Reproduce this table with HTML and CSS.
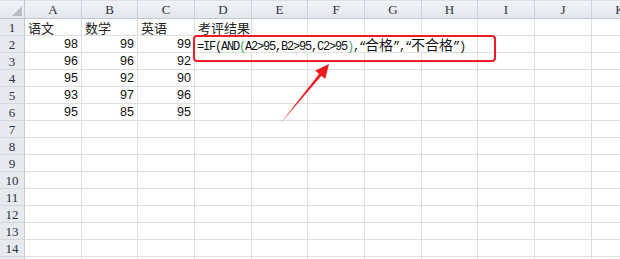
FILE: index.html
```html
<!DOCTYPE html>
<html lang="zh-CN">
<head>
<meta charset="utf-8">
<title>考评结果</title>
<link rel="stylesheet" href="styles.css">
</head>
<body>
<div class="sheet">
  <div class="corner"></div>
  <div class="ch">A</div><div class="ch">B</div><div class="ch">C</div><div class="ch">D</div><div class="ch">E</div><div class="ch">F</div><div class="ch">G</div><div class="ch">H</div><div class="ch">I</div><div class="ch">J</div><div class="ch">K</div>

  <div class="rh">1</div><div class="c t">语文</div><div class="c t">数学</div><div class="c t">英语</div><div class="c t">考评结果</div><div class="c"></div><div class="c"></div><div class="c"></div><div class="c"></div><div class="c"></div><div class="c"></div><div class="c"></div>

  <div class="rh">2</div><div class="c n">98</div><div class="c n">99</div><div class="c n">99</div>
  <div class="c formula">=IF(AND<span class="paren">(</span>A2&gt;95,B2&gt;95,C2&gt;95<span class="paren">)</span>,“<span class="cjk">合格</span>”,“<span class="cjk">不合格</span>”)</div>
  <div class="c"></div><div class="c"></div><div class="c"></div>

  <div class="rh">3</div><div class="c n">96</div><div class="c n">96</div><div class="c n">92</div><div class="c"></div><div class="c"></div><div class="c"></div><div class="c"></div><div class="c"></div><div class="c"></div><div class="c"></div><div class="c"></div>
  <div class="rh">4</div><div class="c n">95</div><div class="c n">92</div><div class="c n">90</div><div class="c"></div><div class="c"></div><div class="c"></div><div class="c"></div><div class="c"></div><div class="c"></div><div class="c"></div><div class="c"></div>
  <div class="rh">5</div><div class="c n">93</div><div class="c n">97</div><div class="c n">96</div><div class="c"></div><div class="c"></div><div class="c"></div><div class="c"></div><div class="c"></div><div class="c"></div><div class="c"></div><div class="c"></div>
  <div class="rh">6</div><div class="c n">95</div><div class="c n">85</div><div class="c n">95</div><div class="c"></div><div class="c"></div><div class="c"></div><div class="c"></div><div class="c"></div><div class="c"></div><div class="c"></div><div class="c"></div>

  <div class="rh">7</div><div class="c"></div><div class="c"></div><div class="c"></div><div class="c"></div><div class="c"></div><div class="c"></div><div class="c"></div><div class="c"></div><div class="c"></div><div class="c"></div><div class="c"></div>
  <div class="rh">8</div><div class="c"></div><div class="c"></div><div class="c"></div><div class="c"></div><div class="c"></div><div class="c"></div><div class="c"></div><div class="c"></div><div class="c"></div><div class="c"></div><div class="c"></div>
  <div class="rh">9</div><div class="c"></div><div class="c"></div><div class="c"></div><div class="c"></div><div class="c"></div><div class="c"></div><div class="c"></div><div class="c"></div><div class="c"></div><div class="c"></div><div class="c"></div>
  <div class="rh">10</div><div class="c"></div><div class="c"></div><div class="c"></div><div class="c"></div><div class="c"></div><div class="c"></div><div class="c"></div><div class="c"></div><div class="c"></div><div class="c"></div><div class="c"></div>
  <div class="rh">11</div><div class="c"></div><div class="c"></div><div class="c"></div><div class="c"></div><div class="c"></div><div class="c"></div><div class="c"></div><div class="c"></div><div class="c"></div><div class="c"></div><div class="c"></div>
  <div class="rh">12</div><div class="c"></div><div class="c"></div><div class="c"></div><div class="c"></div><div class="c"></div><div class="c"></div><div class="c"></div><div class="c"></div><div class="c"></div><div class="c"></div><div class="c"></div>
  <div class="rh">13</div><div class="c"></div><div class="c"></div><div class="c"></div><div class="c"></div><div class="c"></div><div class="c"></div><div class="c"></div><div class="c"></div><div class="c"></div><div class="c"></div><div class="c"></div>
  <div class="rh">14</div><div class="c"></div><div class="c"></div><div class="c"></div><div class="c"></div><div class="c"></div><div class="c"></div><div class="c"></div><div class="c"></div><div class="c"></div><div class="c"></div><div class="c"></div>
  <div class="rh"></div><div class="c"></div><div class="c"></div><div class="c"></div><div class="c"></div><div class="c"></div><div class="c"></div><div class="c"></div><div class="c"></div><div class="c"></div><div class="c"></div><div class="c"></div>
</div>

<!-- annotation: highlight box around the formula and a pointer arrow -->
<div class="callout"></div>
<svg class="arrow" width="620" height="259" viewBox="0 0 620 259">
  <polygon points="280,124 319,73.9 315.4,70.6 329,64 325.2,78.9 321.4,75.7" fill="#f0191e"/>
</svg>
</body>
</html>
```

FILE: styles.css
```css
html, body {
  margin: 0;
  padding: 0;
  background: #ffffff;
  overflow: hidden;
}

body {
  position: relative;
  width: 620px;
  height: 259px;
}

.sheet {
  display: grid;
  grid-template-columns: 25px 57px 56px 57px 57px 56px 57px 57px 56px 57px 57px 57px;
  grid-template-rows: 19px repeat(15, 17px);
  width: 649px;
  font-family: "Liberation Sans", Arial, sans-serif;
  font-size: 12px;
  color: #111;
}

.sheet > div {
  box-sizing: border-box;
  white-space: nowrap;
}

/* column headers */
.ch {
  background: linear-gradient(#f1f3f6, #e3e7ec);
  border-top: 1px solid #dde1e6;
  border-right: 1px solid #cdd2d9;
  border-bottom: 1px solid #c2c8d0;
  font-family: "Liberation Serif", "DejaVu Serif", serif;
  font-size: 13px;
  color: #2a3340;
  text-align: center;
  line-height: 18px;
}

.corner {
  position: relative;
  background: linear-gradient(#f1f3f6, #e3e7ec);
  border-top: 1px solid #dde1e6;
  border-right: 1px solid #c2c8d0;
  border-bottom: 1px solid #c2c8d0;
}

.corner::after {
  content: "";
  position: absolute;
  right: 2px;
  bottom: 2px;
  width: 0;
  height: 0;
  border-left: 10px solid transparent;
  border-bottom: 10px solid #b9bec6;
}

/* row headers */
.rh {
  background: #e6e9ee;
  border-right: 1px solid #c2c8d0;
  border-bottom: 1px solid #d3d8df;
  font-family: "Liberation Serif", "DejaVu Serif", serif;
  font-size: 13px;
  color: #2a3340;
  text-align: center;
  line-height: 17px;
}

/* body cells */
.c {
  border-right: 1px solid #dedfe1;
  border-bottom: 1px solid #dedfe1;
  line-height: 17px;
}

.t {
  padding-left: 3px;
  font-family: "Noto Sans CJK SC", "Noto Sans CJK JP", sans-serif;
  font-size: 13px;
  line-height: 17px;
  color: #222;
}

.n {
  padding-right: 3px;
  text-align: right;
  font-size: 12.5px;
}

.formula {
  grid-column: span 5;
  padding-left: 2px;
  font-family: "Liberation Mono", "DejaVu Sans Mono", monospace;
  font-size: 12px;
  letter-spacing: -1.2px;
  line-height: 17px;
  color: #111;
}

.formula .paren {
  color: #3aa757;
}

.formula .cjk {
  font-family: "Noto Sans CJK SC", "Noto Sans CJK JP", sans-serif;
  font-size: 14px;
  letter-spacing: 0;
}

.callout {
  position: absolute;
  left: 193px;
  top: 35px;
  width: 303px;
  height: 27px;
  box-sizing: border-box;
  border: 2.5px solid #ee1c24;
  border-radius: 4px;
}

.arrow {
  position: absolute;
  left: 0;
  top: 0;
  pointer-events: none;
}
```
